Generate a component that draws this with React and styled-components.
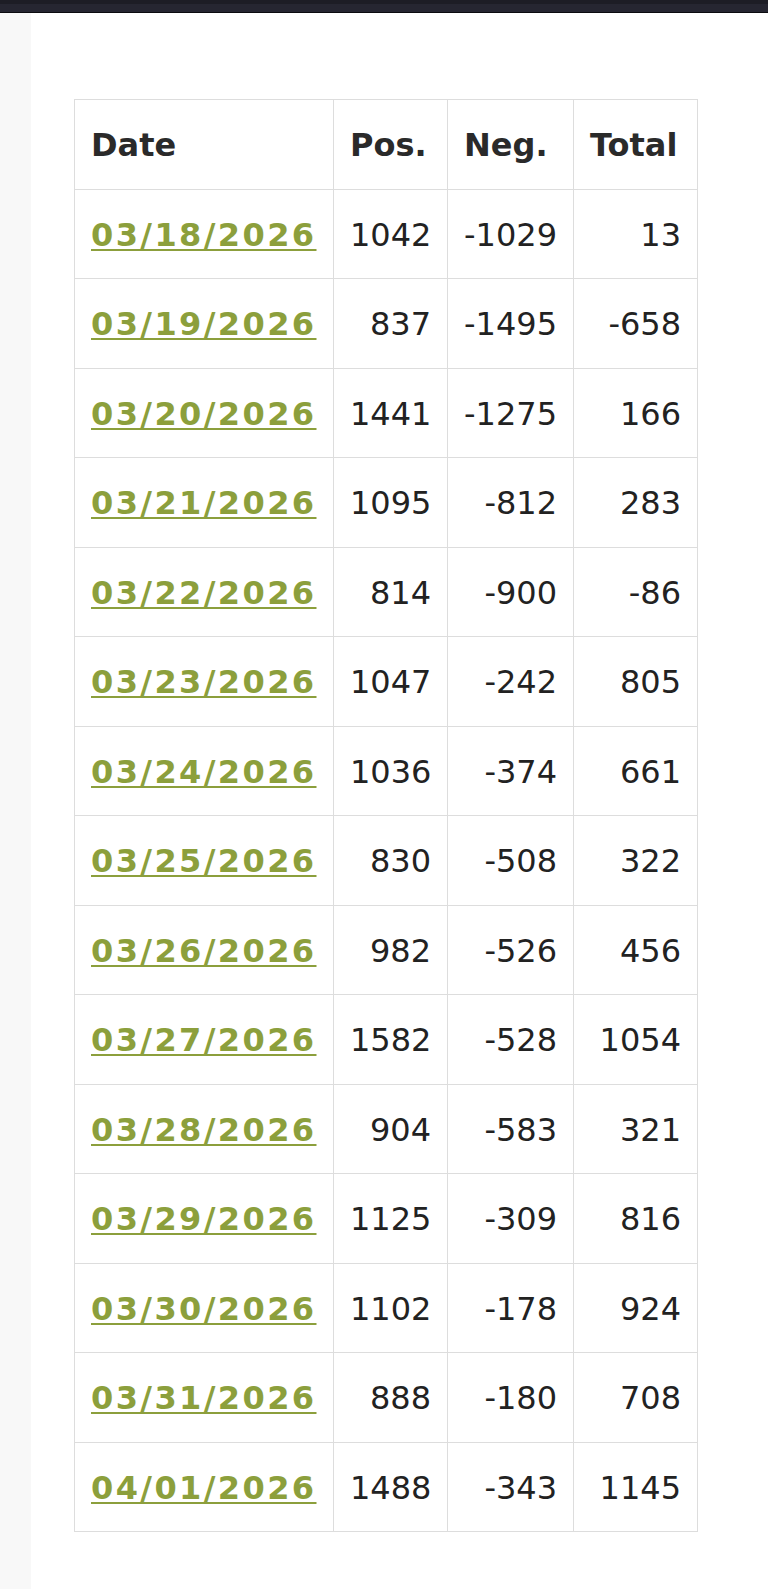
import React from 'react';
import styled, { createGlobalStyle } from 'styled-components';

const GlobalStyle = createGlobalStyle`
  html, body {
    margin: 0;
    padding: 0;
    background: #ffffff;
  }
  body {
    font-family: 'DejaVu Sans', Verdana, sans-serif;
    color: #222;
  }
`;

const rows = [
  ['03/18/2026', 1042, -1029, 13],
  ['03/19/2026', 837, -1495, -658],
  ['03/20/2026', 1441, -1275, 166],
  ['03/21/2026', 1095, -812, 283],
  ['03/22/2026', 814, -900, -86],
  ['03/23/2026', 1047, -242, 805],
  ['03/24/2026', 1036, -374, 661],
  ['03/25/2026', 830, -508, 322],
  ['03/26/2026', 982, -526, 456],
  ['03/27/2026', 1582, -528, 1054],
  ['03/28/2026', 904, -583, 321],
  ['03/29/2026', 1125, -309, 816],
  ['03/30/2026', 1102, -178, 924],
  ['03/31/2026', 888, -180, 708],
  ['04/01/2026', 1488, -343, 1145],
];

const TopBar = styled.div`
  height: 12px;
  background: linear-gradient(#1d1d25 0, #1d1d25 4px, #262631 4px);
  border-bottom: 1px solid #0b0b0f;
`;

const Layout = styled.div`
  display: flex;
  min-height: calc(100vh - 13px);
`;

const Sidebar = styled.aside`
  width: 31px;
  flex: none;
  background: #f8f8f8;
`;

const Main = styled.main`
  flex: 1;
  padding: 86px 0 40px 43px;
`;

const Table = styled.table`
  border-collapse: collapse;
  table-layout: fixed;
  width: 623px;
  border: 1px solid #dddddd;
  font-size: 32px;
  line-height: 44.5px;
`;

const Col = styled.col`
  width: ${p => p.$w}px;
`;

const Th = styled.th`
  border: 1px solid #dddddd;
  padding: 23px 16px 21px;
  text-align: left;
  font-weight: bold;
  color: #2a2a2a;
  white-space: nowrap;
`;

const Td = styled.td`
  border: 1px solid #dddddd;
  padding: 23px 16px 21px;
  text-align: ${p => (p.$right ? 'right' : 'left')};
  color: #222;
  white-space: nowrap;
`;

const DateLink = styled.a`
  color: #8c9f3c;
  font-weight: bold;
  letter-spacing: 2.4px;
  text-decoration: underline;
  text-decoration-thickness: 2px;
  text-underline-offset: 3px;
`;

export default function App() {
  return (
    <>
      <GlobalStyle />
      <TopBar />
      <Layout>
        <Sidebar />
        <Main>
          <Table>
            <colgroup>
              <Col $w={259} />
              <Col $w={114} />
              <Col $w={126} />
              <Col $w={124} />
            </colgroup>
            <thead>
              <tr>
                <Th>Date</Th>
                <Th>Pos.</Th>
                <Th>Neg.</Th>
                <Th>Total</Th>
              </tr>
            </thead>
            <tbody>
              {rows.map(([date, pos, neg, total]) => (
                <tr key={date}>
                  <Td>
                    <DateLink href="#">{date}</DateLink>
                  </Td>
                  <Td $right>{pos}</Td>
                  <Td $right>{neg}</Td>
                  <Td $right>{total}</Td>
                </tr>
              ))}
            </tbody>
          </Table>
        </Main>
      </Layout>
    </>
  );
}
